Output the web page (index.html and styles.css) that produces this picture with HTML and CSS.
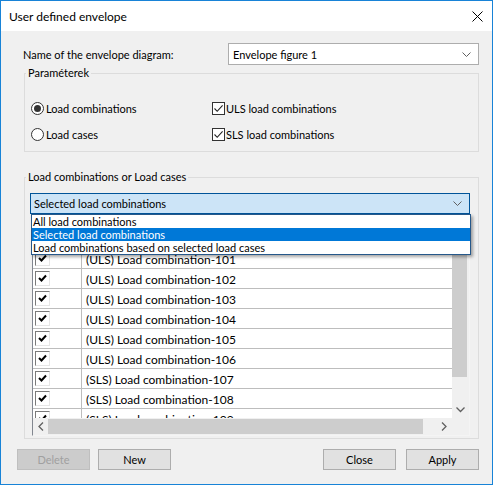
FILE: index.html
```html
<!DOCTYPE html>
<html>
<head>
<meta charset="utf-8">
<link rel="stylesheet" href="styles.css">
</head>
<body>
<div class="window">
  <div class="titlebar">
    <span class="title">User defined envelope</span>
    <svg class="close" width="11" height="11" viewBox="0 0 11 11"><path d="M0.5 0.5 L10.5 10.5 M10.5 0.5 L0.5 10.5" stroke="#000" stroke-width="1" fill="none"/></svg>
  </div>
  <div class="content">
    <div class="name-row">
      <span class="name-label">Name of the envelope diagram:</span>
      <div class="combo name-combo">
        <span class="combo-text">Envelope figure 1</span>
        <svg class="chev" width="9" height="5" viewBox="0 0 9 5"><path d="M0.5 0.5 L4.5 4.5 L8.5 0.5" stroke="#606060" fill="none"/></svg>
      </div>
    </div>

    <fieldset class="group params">
      <legend>Paraméterek</legend>
      <div class="param-grid">
        <div class="opt"><span class="radio on"></span><span>Load combinations</span></div>
        <div class="opt"><span class="cbox"><svg width="11" height="11" viewBox="0 0 11 11"><path d="M1.5 5.5 L4.2 8.3 L9.6 2.3" stroke="#222" stroke-width="1.1" fill="none"/></svg></span><span>ULS load combinations</span></div>
        <div class="opt"><span class="radio"></span><span>Load cases</span></div>
        <div class="opt"><span class="cbox"><svg width="11" height="11" viewBox="0 0 11 11"><path d="M1.5 5.5 L4.2 8.3 L9.6 2.3" stroke="#222" stroke-width="1.1" fill="none"/></svg></span><span>SLS load combinations</span></div>
      </div>
    </fieldset>

    <fieldset class="group lists">
      <legend>Load combinations or Load cases</legend>
      <div class="combo-wrap">
        <div class="combo focus-combo">
          <span class="combo-text">Selected load combinations</span>
          <svg class="chev" width="9" height="5" viewBox="0 0 9 5"><path d="M0.5 0.5 L4.5 4.5 L8.5 0.5" stroke="#606060" fill="none"/></svg>
        </div>
        <ul class="dropdown">
          <li>All load combinations</li>
          <li class="sel">Selected load combinations</li>
          <li>Load combinations based on selected load cases</li>
        </ul>
      </div>
      <div class="listbox">
        <div class="list-main">
          <div class="rows">
            <div class="row"><div class="cell-chk"><span class="lchk"><svg width="11" height="11" viewBox="0 0 11 11"><path d="M2 5 L4.5 7.5 L9 2.5" stroke="#000" stroke-width="2" fill="none"/></svg></span></div><div class="cell-txt">(ULS) Load combination-100</div></div>
            <div class="row"><div class="cell-chk"><span class="lchk"><svg width="11" height="11" viewBox="0 0 11 11"><path d="M2 5 L4.5 7.5 L9 2.5" stroke="#000" stroke-width="2" fill="none"/></svg></span></div><div class="cell-txt">(ULS) Load combination-101</div></div>
            <div class="row"><div class="cell-chk"><span class="lchk"><svg width="11" height="11" viewBox="0 0 11 11"><path d="M2 5 L4.5 7.5 L9 2.5" stroke="#000" stroke-width="2" fill="none"/></svg></span></div><div class="cell-txt">(ULS) Load combination-102</div></div>
            <div class="row"><div class="cell-chk"><span class="lchk"><svg width="11" height="11" viewBox="0 0 11 11"><path d="M2 5 L4.5 7.5 L9 2.5" stroke="#000" stroke-width="2" fill="none"/></svg></span></div><div class="cell-txt">(ULS) Load combination-103</div></div>
            <div class="row"><div class="cell-chk"><span class="lchk"><svg width="11" height="11" viewBox="0 0 11 11"><path d="M2 5 L4.5 7.5 L9 2.5" stroke="#000" stroke-width="2" fill="none"/></svg></span></div><div class="cell-txt">(ULS) Load combination-104</div></div>
            <div class="row"><div class="cell-chk"><span class="lchk"><svg width="11" height="11" viewBox="0 0 11 11"><path d="M2 5 L4.5 7.5 L9 2.5" stroke="#000" stroke-width="2" fill="none"/></svg></span></div><div class="cell-txt">(ULS) Load combination-105</div></div>
            <div class="row"><div class="cell-chk"><span class="lchk"><svg width="11" height="11" viewBox="0 0 11 11"><path d="M2 5 L4.5 7.5 L9 2.5" stroke="#000" stroke-width="2" fill="none"/></svg></span></div><div class="cell-txt">(ULS) Load combination-106</div></div>
            <div class="row"><div class="cell-chk"><span class="lchk"><svg width="11" height="11" viewBox="0 0 11 11"><path d="M2 5 L4.5 7.5 L9 2.5" stroke="#000" stroke-width="2" fill="none"/></svg></span></div><div class="cell-txt">(SLS) Load combination-107</div></div>
            <div class="row"><div class="cell-chk"><span class="lchk"><svg width="11" height="11" viewBox="0 0 11 11"><path d="M2 5 L4.5 7.5 L9 2.5" stroke="#000" stroke-width="2" fill="none"/></svg></span></div><div class="cell-txt">(SLS) Load combination-108</div></div>
            <div class="row"><div class="cell-chk"><span class="lchk"><svg width="11" height="11" viewBox="0 0 11 11"><path d="M2 5 L4.5 7.5 L9 2.5" stroke="#000" stroke-width="2" fill="none"/></svg></span></div><div class="cell-txt">(SLS) Load combination-109</div></div>
          </div>
          <div class="vscroll">
            <div class="vthumb"></div>
            <div class="vtrack"></div>
            <div class="sbtn"><svg width="9" height="6" viewBox="0 0 9 6"><path d="M0.5 0.5 L4.5 4.5 L8.5 0.5" stroke="#606060" stroke-width="1.3" fill="none"/></svg></div>
          </div>
        </div>
        <div class="hscroll">
          <div class="sbtn"><svg width="6" height="9" viewBox="0 0 6 9"><path d="M5 0.5 L1 4.5 L5 8.5" stroke="#606060" stroke-width="1.3" fill="none"/></svg></div>
          <div class="hthumb"></div>
          <div class="htrack"></div>
          <div class="sbtn"><svg width="6" height="9" viewBox="0 0 6 9"><path d="M1 0.5 L5 4.5 L1 8.5" stroke="#606060" stroke-width="1.3" fill="none"/></svg></div>
          <div class="corner"></div>
        </div>
      </div>
    </fieldset>

    <div class="buttons">
      <button class="btn" disabled>Delete</button>
      <button class="btn">New</button>
      <span class="spacer"></span>
      <button class="btn">Close</button>
      <button class="btn apply">Apply</button>
    </div>
  </div>
</div>
</body>
</html>
```

FILE: styles.css
```css
* { box-sizing: border-box; }
html, body { margin: 0; padding: 0; background: #f0f0f0; }
body { font-family: Lato, "Noto Sans", sans-serif; font-size: 11px; color: #000; }

.window {
  width: 493px;
  height: 485px;
  border: 1px solid #1883d7;
  background: #f0f0f0;
  display: flex;
  flex-direction: column;
  overflow: hidden;
}

.titlebar {
  height: 30px;
  background: #fff;
  display: flex;
  align-items: center;
  padding: 0 9px 0 8px;
  flex: none;
}
.title { font-size: 12px; flex: 1; }
.close { margin-top: 1px; }

.content { flex: 1; position: relative; }

.name-row {
  display: flex;
  align-items: center;
  margin-top: 12px;
  height: 22px;
  padding-left: 22px;
}
.name-label { width: 205px; }

.combo {
  display: flex;
  align-items: center;
  background: #fff;
  border: 1px solid #adadad;
  height: 22px;
}
.combo-text { flex: 1; }
.name-combo { width: 251px; padding-left: 4px; }
.chev { margin-right: 7px; }

.group {
  margin: 0 13px 0 23px;
  padding: 0;
  border: 1px solid #dcdcdc;
  min-width: 0;
}
.group legend {
  padding: 0 2px;
  margin-left: 1px;
  line-height: 14px;
}

.params { margin-top: 1px; height: 86px; }
.param-grid {
  display: grid;
  grid-template-columns: 181px 1fr;
  grid-auto-rows: 26px;
  padding: 15px 0 0 6px;
}
.opt { display: flex; align-items: center; }
.radio {
  width: 13px; height: 13px;
  border: 1px solid #333;
  border-radius: 50%;
  background: #fff;
  margin-right: 2px;
  display: flex; align-items: center; justify-content: center;
}
.radio.on::after {
  content: "";
  width: 7px; height: 7px;
  border-radius: 50%;
  background: #333;
}
.cbox {
  width: 13px; height: 13px;
  border: 1px solid #333;
  background: #fff;
  margin-right: 1px;
  display: flex; align-items: center; justify-content: center;
}

.lists { margin-top: 18px; height: 269px; }
.combo-wrap { position: relative; margin: 9px 8px 0 5px; }
.focus-combo {
  background: #cce4f7;
  border-color: #005499;
  height: 21px;
  padding-left: 3px;
}
.dropdown {
  position: absolute;
  top: 21px;
  left: 1px;
  right: -1px;
  margin: 0;
  padding: 0;
  list-style: none;
  background: #fff;
  border: 1px solid #26588a;
  box-shadow: 2px 2px 3px rgba(0,0,0,0.35);
  z-index: 5;
}
.dropdown li { height: 13px; line-height: 13px; padding-left: 1px; white-space: nowrap; }
.dropdown li.sel { background: #0078d7; color: #fff; }

.listbox {
  margin: 14px 8px 0 7px;
  border: 1px solid #828790;
  border-right-color: #f4f4f4;
  border-bottom-color: #f4f4f4;
  background: #fff;
  height: 208px;
  display: flex;
  flex-direction: column;
}
.list-main { flex: 1; display: flex; min-height: 0; }
.rows { flex: 1; overflow: hidden; }
.row { display: flex; height: 20px; border-bottom: 1px solid #bdbdbd; }
.cell-chk { width: 49px; border-right: 1px solid #bdbdbd; padding: 2px 0 0 2px; }
.lchk {
  display: flex; align-items: center; justify-content: center;
  width: 15px; height: 15px;
  border: 1px solid;
  border-color: #7a7a7a #e6e6e6 #e6e6e6 #7a7a7a;
  background: #fff;
}
.cell-txt { padding: 2px 0 0 4px; font-size: 12px; line-height: 17px; white-space: nowrap; }

.vscroll { width: 17px; display: flex; flex-direction: column; background: #f0f0f0; }
.vthumb { height: 148px; background: #cdcdcd; margin-right: 2px; }
.vtrack { flex: 1; }
.sbtn { height: 17px; width: 17px; display: flex; align-items: center; justify-content: center; flex: none; }

.hscroll { height: 17px; display: flex; background: #f0f0f0; flex: none; }
.hscroll .sbtn:first-child { width: 15px; }
.hthumb { width: 375px; background: #cdcdcd; margin: 1px 0; }
.htrack { flex: 1; }
.corner { width: 17px; background: #f0f0f0; }

.buttons {
  display: flex;
  margin-top: 10px;
  padding-left: 16px;
  padding-right: 13px;
}
.spacer { flex: 1; }
.btn {
  width: 73px;
  height: 21px;
  font-family: inherit;
  font-size: 11px;
  background: #e1e1e1;
  border: 1px solid #adadad;
  color: #000;
  padding: 0;
  margin-right: 8px;
}
.btn:disabled { background: #cccccc; border-color: #bfbfbf; color: #a0a0a0; }
.btn.apply { margin-right: 0; margin-left: 2px; }
```
